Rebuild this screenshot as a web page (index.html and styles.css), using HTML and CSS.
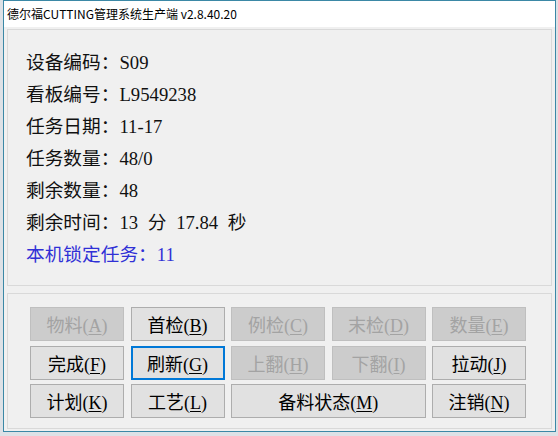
FILE: index.html
```html
<!DOCTYPE html>
<html lang="zh-CN">
<head>
    <meta charset="UTF-8">
    <meta name="viewport" content="width=device-width, initial-scale=1.0">
    <title>德尔福CUTTING管理系统生产端</title>
    <link rel="stylesheet" href="styles.css">
</head>
<body>
    <div class="window">
        <div class="title-bar">德尔福CUTTING管理系统生产端 v2.8.40.20</div>
        <div class="client">
            <div class="group info">
                <div class="row">设备编码：S09</div>
                <div class="row">看板编号：L9549238</div>
                <div class="row">任务日期：11-17</div>
                <div class="row">任务数量：48/0</div>
                <div class="row">剩余数量：48</div>
                <div class="row">剩余时间：13 分 17.84 秒</div>
                <div class="row lock">本机锁定任务：11</div>
            </div>
            <div class="group actions">
                <button class="btn" disabled>物料(<u>A</u>)</button>
                <button class="btn">首检(<u>B</u>)</button>
                <button class="btn" disabled>例检(<u>C</u>)</button>
                <button class="btn" disabled>末检(<u>D</u>)</button>
                <button class="btn" disabled>数量(<u>E</u>)</button>
                <button class="btn">完成(<u>F</u>)</button>
                <button class="btn focused">刷新(<u>G</u>)</button>
                <button class="btn" disabled>上翻(<u>H</u>)</button>
                <button class="btn" disabled>下翻(<u>I</u>)</button>
                <button class="btn">拉动(<u>J</u>)</button>
                <button class="btn">计划(<u>K</u>)</button>
                <button class="btn">工艺(<u>L</u>)</button>
                <button class="btn wide">备料状态(<u>M</u>)</button>
                <button class="btn">注销(<u>N</u>)</button>
            </div>
        </div>
    </div>
</body>
</html>
```

FILE: styles.css
```css
body {
    margin: 0;
    width: 558px;
    height: 436px;
    overflow: hidden;
    background: #dde1e6;
}
.window {
    margin-left: 3px;
    width: 551px;
    height: 430px;
    border: 1px solid #3b88a6;
    background: #f0f0f0;
}
.title-bar {
    height: 26px;
    line-height: 26px;
    padding-left: 3px;
    background: #fff;
    font-family: "Noto Sans CJK SC", sans-serif;
    font-size: 12px;
    color: #000;
}
.client {
    padding: 2px 3px 0 3px;
}
.group {
    border: 1px solid #d9d9d9;
}
.info {
    height: 224px;
    padding: 17px 18px 14px 18px;
    font-family: "Liberation Serif", "Noto Sans CJK SC", serif;
    font-size: 18.7px;
    color: #111;
}
.row {
    height: 32px;
    line-height: 32px;
    white-space: pre;
    word-spacing: 5px;
}
.lock { color: #3030d6; }
.actions {
    margin-top: 7px;
    padding: 13px 0 10px 22px;
    display: grid;
    grid-template-columns: repeat(5, 94px);
    grid-auto-rows: 34px;
    column-gap: 6.5px;
    row-gap: 4.5px;
}
.btn {
    margin: 0;
    padding: 0;
    background: #e1e1e1;
    border: 1px solid #adadad;
    font-family: "Liberation Serif", "Noto Sans CJK SC", serif;
    font-size: 18px;
    color: #000;
}
.btn u { text-underline-offset: 2px; }
.btn:disabled {
    background: #cccccc;
    border-color: #bfbfbf;
    color: #a3a3a3;
}
.focused { border: 2px solid #0078d7; }
.wide { grid-column: span 2; }
```
